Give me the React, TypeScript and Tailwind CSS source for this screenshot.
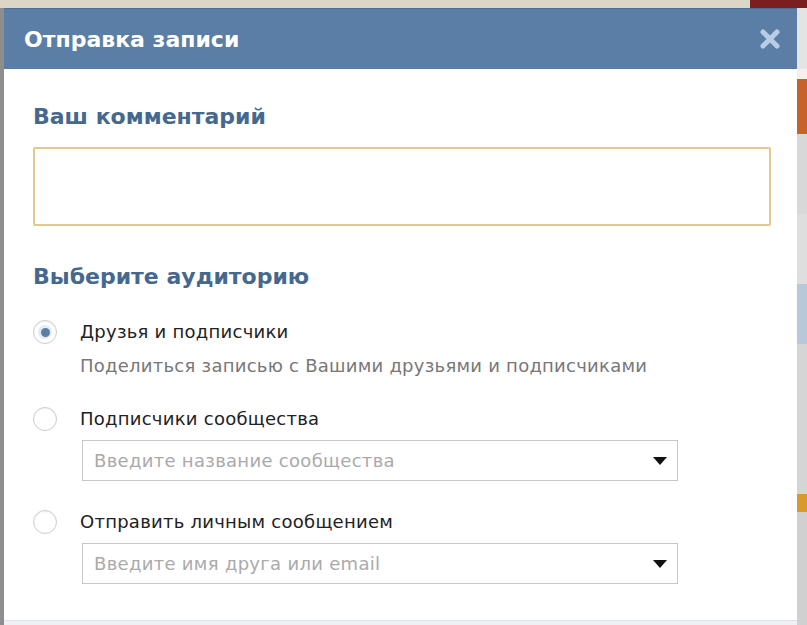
import React from 'react';

const font = { fontFamily: '"DejaVu Sans", Tahoma, sans-serif' };

const Radio = ({ checked }: { checked?: boolean }) => (
  <div className="w-[24px] h-[24px] rounded-full border border-[#c9ccd0] bg-white flex items-center justify-center shadow-[inset_0_1px_2px_rgba(0,0,0,0.06)]">
    {checked && (
      <div className="w-[14px] h-[14px] rounded-full bg-[#e3ebf4] flex items-center justify-center">
        <div className="w-[9px] h-[9px] rounded-full bg-[#5b7ea6]" />
      </div>
    )}
  </div>
);

const Select = ({ placeholder }: { placeholder: string }) => (
  <div className="ml-[2px] w-[596px] h-[41px] border border-[#c5c7ca] bg-white flex items-center justify-between pl-[11px] pr-[10px]">
    <span className="text-[18px] tracking-[0.3px] text-[#aaaaaa]">{placeholder}</span>
    <svg width="14" height="8" viewBox="0 0 14 8">
      <path d="M0 0h14L7 8z" fill="#111" />
    </svg>
  </div>
);

const App: React.FC = () => {
  return (
    <div className="w-[807px] h-[625px] overflow-hidden flex flex-col bg-[#e6e2d8]" style={font}>
      {/* фон сверху */}
      <div className="h-[8px] flex shrink-0">
        <div className="flex-1 bg-[#dcd6c6]" />
        <div className="w-[57px] bg-[#7a1e20]" />
      </div>

      <div className="flex flex-1 min-h-0">
        <div className="w-[4px] bg-[#8e8e8e]" />

        {/* Окно */}
        <div className="w-[793px] flex flex-col bg-white">
          <div className="h-[61px] shrink-0 bg-[#5a7ea6] border-t border-[#4d6f96] flex items-center justify-between pl-[20px] pr-[16px]">
            <span className="text-[22px] font-bold text-white">Отправка записи</span>
            <svg width="22" height="22" viewBox="0 0 22 22">
              <path d="M4 4L18 18M18 4L4 18" stroke="#b9cee6" strokeWidth="5" strokeLinecap="round" />
            </svg>
          </div>

          <div className="flex-1 pl-[29px] pr-[26px] pt-[35px]">
            <div className="text-[22px] leading-[26px] font-bold text-[#45688e]">Ваш комментарий</div>
            <div className="mt-[17px] h-[79px] border-2 border-[#e3c98d] rounded-[2px]" />

            <div className="mt-[38px] text-[22px] leading-[26px] font-bold text-[#45688e]">Выберите аудиторию</div>

            <div className="mt-[30px] grid grid-cols-[47px_1fr] text-[18px] tracking-[0.25px] leading-[24px] text-[#222222]">
              <div className="flex items-center"><Radio checked /></div>
              <div>Друзья и подписчики</div>
              <div />
              <div className="mt-[10px] text-[#777777]">Поделиться записью с Вашими друзьями и подписчиками</div>

              <div className="mt-[29px] flex items-center"><Radio /></div>
              <div className="mt-[29px]">Подписчики сообщества</div>
              <div />
              <div className="mt-[9px]"><Select placeholder="Введите название сообщества" /></div>

              <div className="mt-[29px] flex items-center"><Radio /></div>
              <div className="mt-[29px]">Отправить личным сообщением</div>
              <div />
              <div className="mt-[9px]"><Select placeholder="Введите имя друга или email" /></div>
            </div>
          </div>

          <div className="h-[5px] shrink-0 bg-[#eef0f3] border-t border-[#dfe3e8]" />
        </div>

        {/* фон справа */}
        <div className="flex-1 flex flex-col">
          <div className="h-[61px] bg-[#e4e4e4]" />
          <div className="h-[10px] bg-[#f3f1ea]" />
          <div className="h-[55px] bg-[#c7632a]" />
          <div className="h-[80px] bg-[#d8d8d8]" />
          <div className="h-[70px] bg-[#dedede]" />
          <div className="h-[60px] bg-[#b8c8d8]" />
          <div className="h-[150px] bg-[#d5d5d5]" />
          <div className="h-[18px] bg-[#d99a2b]" />
          <div className="flex-1 bg-[#d0d0d0]" />
        </div>
      </div>
    </div>
  );
};

export default App;
